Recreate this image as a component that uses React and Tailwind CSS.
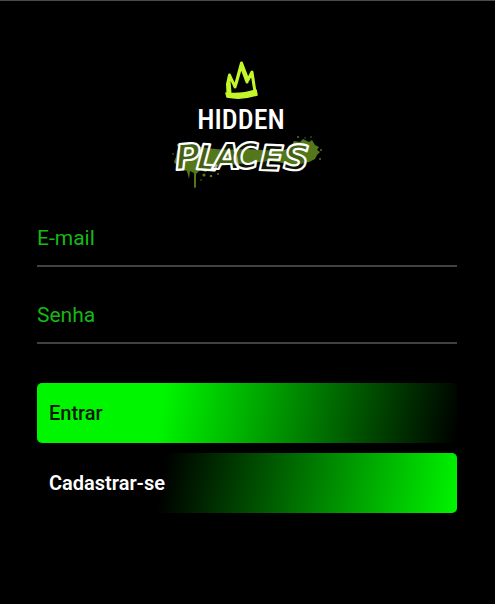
function Logo() {
  return (
    <svg className="h-[132px] w-[152px]" viewBox="172 58 152 132" role="img" aria-label="Hidden Places">
      <path
        d="M228 94 L227.5 84 L229.5 75 L235 87 L241.5 63 L248 80 L252 72 L255 92 M230 93 L229 80 M236 84 L241 66 L247 82 M252.5 76 L254 86"
        fill="none" stroke="#c4f62c" strokeWidth="3" strokeLinejoin="round" strokeLinecap="round"
      />
      <path d="M226 93 Q240 95 256 90 L257 95 Q242 100 227 97 Z" fill="#c4f62c" stroke="#c4f62c" strokeWidth="1.5" strokeLinejoin="round" />
      <g fill="#55771b">
        <path d="M177 151 Q180 143 190 144 L206 148 Q225 151 246 149 L282 151 L291 147 L294 141 L300 142 L303 139 L309 142 L312 140 L315 145 L319 147 L317 150 L320 152 L317 155 L315 159 L309 162 L296 165 L270 161 L240 164 L218 166 L213 170 L209 169 L206 172 L200 170 L196 174 L196 187 Q195 189 194 187 L194 173 L190 171 L189 179 L187 171 L180 169 L174 162 L176 157 Z" />
        <circle cx="298" cy="137" r="1" />
        <circle cx="305" cy="138" r="0.7" />
        <circle cx="311" cy="137" r="0.8" />
        <circle cx="321" cy="150" r="1" />
        <circle cx="320" cy="159" r="1" />
        <circle cx="178" cy="145" r="1.2" />
        <circle cx="173" cy="154" r="0.8" />
        <circle cx="204" cy="175" r="1.6" />
        <circle cx="211" cy="176" r="1.3" />
        <circle cx="218" cy="174" r="1" />
        <circle cx="201" cy="180" r="0.8" />
      </g>
      <text x="241" y="129" textAnchor="middle" fill="#fff" className="font-['Roboto_Condensed',Roboto,sans-serif] text-[28px] font-medium">HIDDEN</text>
      <text
        x="176 196 214 234 259 283" y="170 169 169 169 170 169" rotate="-5 4 0 -3 2 4"
        fill="#283b0b" fillOpacity="0.4" stroke="#fff" strokeWidth="2.2" strokeLinejoin="round"
        className="font-['DejaVu_Sans',sans-serif] text-[35px] font-bold italic"
      >PLACES</text>
    </svg>
  );
}

function Field({ id, label, type }) {
  return (
    <div className="grid h-[53px] border-b-2 border-[#414141] text-[21px] text-[#16b816]">
      <input
        id={id}
        type={type}
        placeholder=" "
        className="peer col-start-1 row-start-1 h-12 w-full bg-transparent outline-none"
      />
      <label htmlFor={id} className="invisible pointer-events-none col-start-1 row-start-1 h-12 leading-[48px] peer-placeholder-shown:visible">
        {label}
      </label>
    </div>
  );
}

export default function App() {
  return (
    <main className="min-h-screen border-t border-[#4a4a4a] bg-black px-[37px] pt-[57px] pb-12 font-[Roboto,sans-serif]">
      <header className="flex justify-center">
        <Logo />
      </header>
      <form className="mt-6 pr-px" onSubmit={(event) => event.preventDefault()}>
        <div className="flex flex-col gap-6">
          <Field id="email" label="E-mail" type="email" />
          <Field id="password" label="Senha" type="password" />
        </div>
        <div className="mt-[39px] flex flex-col gap-2.5">
          <button type="submit" className="h-[60px] rounded-[5px] bg-[linear-gradient(100deg,#00f500_30%,#000_100%)] px-3 text-left text-xl font-medium text-[#031a03]">
            Entrar
          </button>
          <button type="button" className="h-[60px] rounded-[5px] bg-[linear-gradient(100deg,#000_30%,#00f500_100%)] px-3 text-left text-xl font-semibold text-white">
            Cadastrar-se
          </button>
        </div>
      </form>
    </main>
  );
}
